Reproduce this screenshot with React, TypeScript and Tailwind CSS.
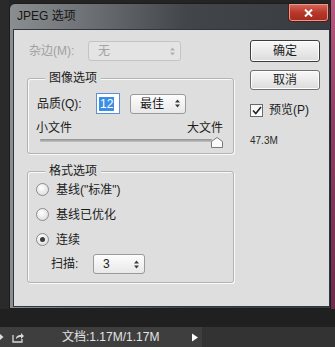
import React from "react";

function UpDown({ dim }: { dim?: boolean }) {
  return (
    <svg width="5" height="9" viewBox="0 0 5 9" className={dim ? "text-[#b0b0b0]" : "text-[#3a3a3a]"}>
      <path d="M2.5 0.5L5 3.5H0Z M0 5.5H5L2.5 8.5Z" fill="currentColor" />
    </svg>
  );
}

function Select({ value, className, dim }: { value: string; className: string; dim?: boolean }) {
  return (
    <div
      className={
        "flex items-center justify-between rounded-[3px] border pl-[9px] pr-[5px] " +
        (dim
          ? "border-[#c4c4c4] bg-[#e4e4e4] text-[#a3a3a3] "
          : "border-[#9a9a9a] bg-[linear-gradient(#fdfdfd,#e8e8e8)] text-[#1b1b1b] ") +
        className
      }
    >
      <span className="leading-[14px]">{value}</span>
      <UpDown dim={dim} />
    </div>
  );
}

function Radio({ label, on }: { label: string; on?: boolean }) {
  return (
    <div className="flex h-[25px] items-center pl-[8px]">
      <div className="flex h-[13px] w-[13px] items-center justify-center rounded-full border border-[#8c8c8c] bg-[radial-gradient(circle_at_40%_35%,#ffffff,#d6d6d6)]">
        {on && <div className="h-[5px] w-[5px] rounded-full bg-[#3c3c3c]" />}
      </div>
      <span className="ml-[7px] text-[12px] leading-[14px]">{label}</span>
    </div>
  );
}

function Group({ title, className, children }: { title: string; className: string; children: React.ReactNode }) {
  return (
    <div
      className={
        "relative w-[207px] rounded-[3px] border border-[#b3b3b3] shadow-[inset_1px_1px_0_#fafafa,1px_1px_0_#fafafa] " +
        className
      }
    >
      <span className="absolute -top-[9px] left-[17px] bg-[#dedede] px-[4px] text-[12px] leading-[16px]">{title}</span>
      {children}
    </div>
  );
}

export default function App() {
  return (
    <div className="flex h-[347px] w-[335px] flex-col overflow-hidden bg-[#242424] font-['Liberation_Sans','Noto_Sans_CJK_SC',sans-serif] text-[#1b1b1b]">
      <div className="flex h-[309px]">
        <div className="w-[9px] bg-[#2a2a2a]" />
        <div className="mt-[3px] flex w-[322px] flex-col rounded-t-[6px] border border-[#1c1c1c] bg-[linear-gradient(90deg,#8b8e91_0%,#6c7074_25%,#42454a_55%,#383b40_100%)]">
          {/* title bar */}
          <div className="flex h-[26px] items-start justify-between">
            <span className="pl-[7px] pt-[4px] text-[12px] leading-[16px] text-[#151515]">JPEG 选项</span>
            <div className="mr-[1px] flex h-[18px] w-[41px] items-center justify-center rounded-b-[4px] border border-t-0 border-[#5a1a14] bg-[linear-gradient(#d9695c,#b8382b_50%,#a12a1e)] shadow-[inset_0_0_0_1px_#e59a90]">
              <svg width="9" height="8" viewBox="0 0 9 8">
                <path d="M1 0.5L8 7.5M8 0.5L1 7.5" stroke="#ffffff" strokeWidth="2" />
              </svg>
            </div>
          </div>
          {/* client */}
          <div className="ml-[4px] mr-[1px] flex h-[276px] bg-[#dedede] shadow-[0_0_0_1px_#2e3740]">
            <div className="w-[236px] pl-[13px] pt-[11px]">
              <div className="flex h-[20px] items-center pl-[2px]">
                <span className="w-[59px] text-[12px] leading-[14px] text-[#a0a0a0]">杂边(M):</span>
                <Select value="无" dim className="h-[20px] w-[93px] text-[12px]" />
              </div>

              <Group title="图像选项" className="mt-[17px] h-[76px]">
                <div className="flex h-[21px] items-center pl-[9px] mt-[14px]">
                  <span className="w-[59px] text-[12px] leading-[14px]">品质(Q):</span>
                  <div className="flex h-[21px] w-[24px] items-center border border-[#5d8fd6] bg-white pl-[2px]">
                    <span className="bg-[#3b8ee6] px-[1px] text-[12px] leading-[14px] text-white">12</span>
                  </div>
                  <Select value="最佳" className="ml-[10px] h-[20px] w-[56px] text-[12px]" />
                </div>
                <div className="mt-[6px] flex items-end justify-between pl-[8px] pr-[10px] text-[12px] leading-[16px]">
                  <span>小文件</span>
                  <span className="-mt-[2px]">大文件</span>
                </div>
                <div className="relative ml-[12px] mr-[10px] mt-[1px] h-[10px]">
                  <div className="mt-[3px] h-[3px] w-[172px] rounded-[1px] bg-[linear-gradient(#8e8e8e,#c4c4c4)]" />
                  <svg className="absolute -top-[2px] right-[0px]" width="12" height="11" viewBox="0 0 12 11">
                    <path d="M6 0.5L11.5 4.5V10.5H0.5V4.5Z" fill="#fbfbfb" stroke="#7a7a7a" />
                  </svg>
                </div>
              </Group>

              <Group title="格式选项" className="mt-[17px] h-[112px]">
                <div className="pt-[5px]">
                  <Radio label={'基线("标准")'} />
                  <Radio label="基线已优化" />
                  <Radio label="连续" on />
                </div>
                <div className="mt-[2px] flex h-[20px] items-center pl-[23px]">
                  <span className="w-[42px] text-[12px] leading-[14px]">扫描:</span>
                  <Select value="3" className="h-[20px] w-[52px] text-[12px]" />
                </div>
              </Group>
            </div>

            <div className="flex flex-col pt-[10px]">
              <button className="flex h-[22px] w-[70px] items-center justify-center rounded-[3px] border border-[#3c3c3c] bg-[linear-gradient(#f8f8f8,#dcdcdc)] text-[12px] leading-[14px] shadow-[inset_0_0_0_1px_#ffffff]">
                确定
              </button>
              <button className="mt-[8px] flex h-[20px] w-[70px] items-center justify-center rounded-[3px] border border-[#707070] bg-[linear-gradient(#f8f8f8,#dcdcdc)] text-[12px] leading-[14px] shadow-[inset_0_0_0_1px_#ffffff]">
                取消
              </button>
              <div className="mt-[12px] flex h-[16px] items-center">
                <div className="flex h-[13px] w-[13px] items-center justify-center border border-[#6a6a6a] bg-[linear-gradient(#f4f4f4,#ffffff)]">
                  <svg width="10" height="9" viewBox="0 0 10 9">
                    <path d="M1 4.5L3.8 7.5L9 1" stroke="#222" strokeWidth="1.6" fill="none" />
                  </svg>
                </div>
                <span className="ml-[6px] text-[12px] leading-[14px]">预览(P)</span>
              </div>
              <span className="mt-[17px] text-[10px] leading-[12px] text-[#2a2a2a]">47.3M</span>
            </div>
          </div>
        </div>
        <div className="flex-1 bg-[linear-gradient(#b85a82,#8a3f63_40%,#6d2c4c_100%)]" />
      </div>
      <div className="h-[18px] bg-[#202020]" />
      <div className="flex h-[20px] items-center bg-[#333333] text-[12px] leading-[14px] text-[#e4e4e4]">
        <div className="flex h-full w-[202px] items-center bg-[#3e3e3e]">
          <svg width="4" height="8" viewBox="0 0 4 8">
            <path d="M0 1L3.5 4L0 7Z" fill="#dddddd" />
          </svg>
          <svg className="ml-[8px]" width="13" height="11" viewBox="0 0 13 11">
            <path d="M1 3V10H10V7" stroke="#d8d8d8" strokeWidth="1.3" fill="none" />
            <path d="M4 7C4 4 6 3 9 3V1L12 4L9 7V5C7 5 5.5 5.5 4 7Z" fill="#d8d8d8" />
          </svg>
          <span className="ml-[37px]">文档:1.17M/1.17M</span>
          <svg className="ml-auto mr-[4px]" width="6" height="9" viewBox="0 0 6 9">
            <path d="M0 0.5L6 4.5L0 8.5Z" fill="#ffffff" />
          </svg>
        </div>
      </div>
    </div>
  );
}
